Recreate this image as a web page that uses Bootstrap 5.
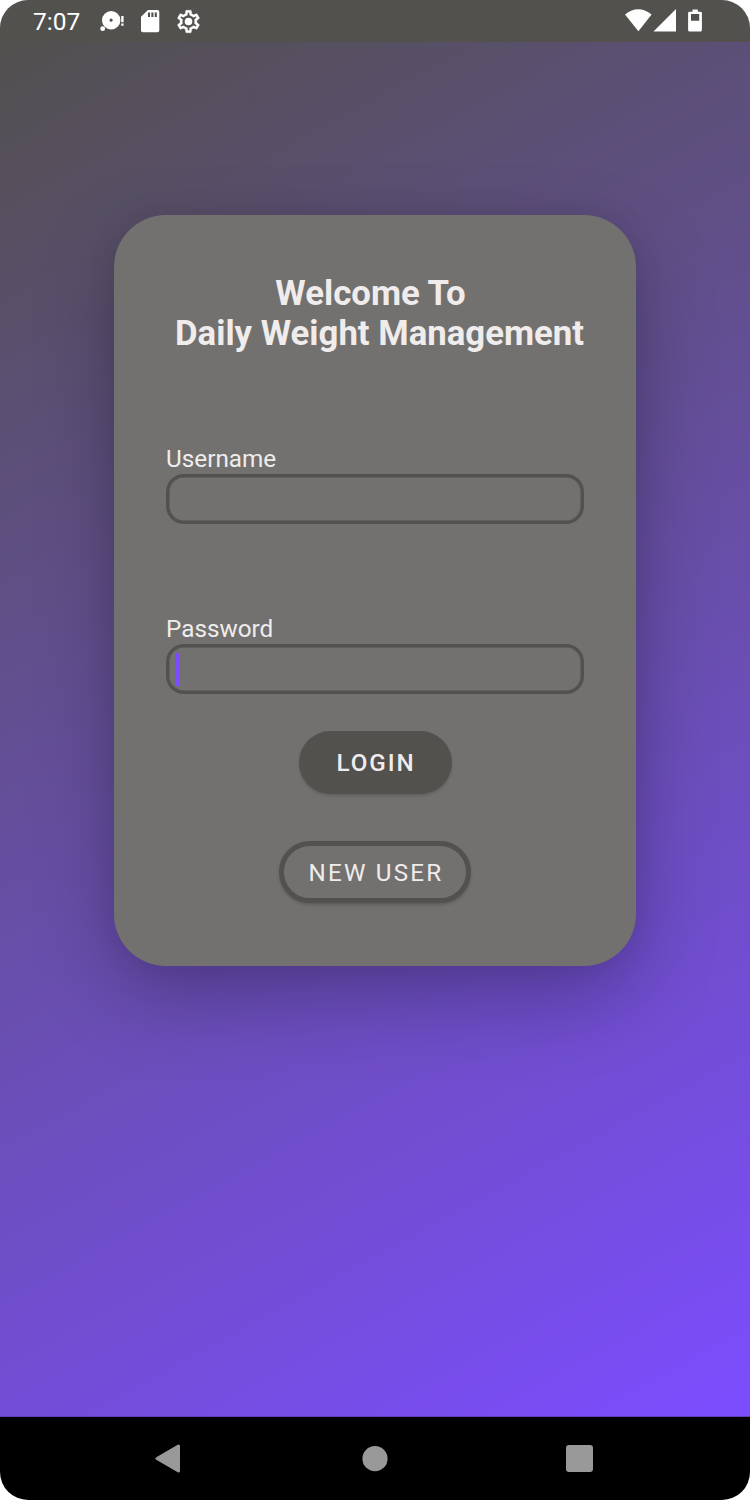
<!DOCTYPE html>
<html lang="en">
<head>
<meta charset="utf-8">
<meta name="viewport" content="width=device-width, initial-scale=1">
<title>Daily Weight Management</title>
<link href="https://cdn.jsdelivr.net/npm/bootstrap@5.3.0/dist/css/bootstrap.min.css" rel="stylesheet">
<style>
  body { font-family: Roboto, sans-serif; color: #f0ecec; background: #fff; }
  .phone { width: 750px; height: 1500px; border-radius: 28px; }
  .status-bar { height: 42px; background: #52514e; padding: 0 47px 0 33px; }
  .clock { font-size: 24.5px; line-height: 42px; color: #fff; width: 66px; padding-top: 1px; }
  .screen { padding-top: 173px; background: linear-gradient(151.4deg, #52504e, #7c4dff); border-bottom: 1px solid #5f3fb8; }
  .login-card { width: 522px; height: 751px; border-radius: 52px; background: #72716f; padding: 57.5px 52px 0;
    box-shadow: 0 32px 80px rgba(0,0,0,.25), 0 0 30px rgba(0,0,0,.08); }
  .title { font-size: 34.75px; line-height: 40px; font-weight: 700; height: 172.5px; }
  .title-top { padding-right: 9px; }
  .title-bottom { padding-left: 9px; }
  .field-label { font-size: 24.3px; line-height: 28px; margin-bottom: 1px; }
  .field-box.form-control { height: 50px; border: 3px solid #52514e; border-radius: 18px; background: transparent; box-shadow: inset 0 0 0 .5px #52514e; }
  .field-gap { margin-top: 91px; }
  .caret { width: 4px; height: 33px; background: #7c4dff; left: 9px; top: 9px; }
  .pill.btn { font-size: 24.2px; letter-spacing: 2.2px; line-height: 1; color: #f0ecec; border-radius: 32px; padding: 2px 0 0 2px; }
  .pill-login.btn { width: 153px; height: 63px; margin-top: 37px; background: #52514e; font-weight: 500; border: 0; letter-spacing: 1.9px; box-shadow: 0 2px 3px rgba(0,0,0,.15); }
  .pill-new.btn { width: 192px; height: 62px; margin-top: 47px; background: #72716f; border: 5px solid #52514e; box-shadow: 0 2px 3px rgba(0,0,0,.18); }
  .nav-bar { height: 83px; background: #000; padding: 0 157px 0 155px; }
</style>
</head>
<body>
<div class="phone d-flex flex-column overflow-hidden">
  <header class="status-bar d-flex align-items-center">
    <div class="clock">7:07</div>
    <svg width="26" height="24" viewBox="99 9 26 24" fill="#fff">
      <path fill-rule="evenodd" d="M111.2 11a9.2 9.2 0 1 1 0 18.4a9.2 9.2 0 1 1 0-18.4M111.1 18.6a1.6 1.6 0 1 0 0 3.2a1.6 1.6 0 1 0 0-3.2"/>
      <circle cx="102.7" cy="28.7" r="2.4"/>
      <path d="M121.2 16h2.4v6.2h-2.4zM121.2 23.4h2.4v2.4h-2.4z"/>
    </svg>
    <svg width="20" height="24" viewBox="141 9 20 24" style="margin-left:16px">
      <path fill="#fff" d="M148 10h9.5q1.8 0 1.8 1.8v18.7q0 1.8-1.8 1.8h-14.7q-1.8 0-1.8-1.8V16.7z"/>
      <path stroke="#52514e" stroke-width="2.1" d="M149 12.4v4.6M152.4 12.4v4.6M155.8 12.4v4.6"/>
    </svg>
    <svg width="27" height="27" viewBox="0 0 24 24" fill="#fff" style="margin-left:14px">
      <path stroke="#fff" stroke-width=".3" d="M19.43 12.98c.04-.32.07-.64.07-.98 0-.34-.03-.66-.07-.98l2.11-1.65c.19-.15.24-.42.12-.64l-2-3.46c-.09-.16-.26-.25-.44-.25-.06 0-.12.01-.17.03l-2.49 1c-.52-.4-1.08-.73-1.69-.98l-.38-2.65C14.46 2.18 14.25 2 14 2h-4c-.25 0-.46.18-.49.42l-.38 2.65c-.61.25-1.17.59-1.69.98l-2.49-1c-.06-.02-.12-.03-.18-.03-.17 0-.34.09-.43.25l-2 3.46c-.13.22-.07.49.12.64l2.11 1.65c-.04.32-.07.65-.07.98 0 .33.03.66.07.98l-2.11 1.65c-.19.15-.24.42-.12.64l2 3.46c.09.16.26.25.44.25.06 0 .12-.01.17-.03l2.49-1c.52.4 1.08.73 1.69.98l.38 2.65c.03.24.24.42.49.42h4c.25 0 .46-.18.49-.42l.38-2.65c.61-.25 1.17-.59 1.69-.98l2.49 1c.06.02.12.03.18.03.17 0 .34-.09.43-.25l2-3.46c.12-.22.07-.49-.12-.64l-2.11-1.65zm-1.98-1.71c.04.31.05.52.05.73 0 .21-.02.43-.05.73l-.14 1.13.89.7 1.08.84-.7 1.21-1.27-.51-1.04-.42-.9.68c-.43.32-.84.56-1.25.73l-1.06.43-.16 1.13-.2 1.35h-1.4l-.19-1.35-.16-1.13-1.06-.43c-.43-.18-.83-.41-1.23-.71l-.91-.7-1.06.43-1.27.51-.7-1.21 1.08-.84.89-.7-.14-1.13c-.03-.31-.05-.54-.05-.74s.02-.43.05-.73l.14-1.13-.89-.7-1.08-.84.7-1.21 1.27.51 1.04.42.9-.68c.43-.32.84-.56 1.25-.73l1.06-.43.16-1.13.2-1.35h1.39l.19 1.35.16 1.13 1.06.43c.43.18.83.41 1.23.71l.91.7 1.06-.43 1.27-.51.7 1.21-1.07.85-.89.7.14 1.13z"/>
      <circle cx="12" cy="12" r="3.4"/>
    </svg>
    <svg class="ms-auto" width="78" height="24" viewBox="625 9 78 24" fill="#fff">
      <path d="M625 14.5q13.3-10.5 26.6 0L638.4 31.3z"/>
      <path d="M676 9v22.5h-22.5z"/>
      <path fill-rule="evenodd" d="M692.5 9.5h5.3v2.2h2.7q1.4 0 1.4 1.4v17q0 1.5-1.4 1.5h-11q-1.4 0-1.4-1.5v-17q0-1.4 1.4-1.4h3zM691 14v6.8h8.2V14z"/>
    </svg>
  </header>
  <main class="screen flex-grow-1">
    <form class="login-card mx-auto d-flex flex-column">
      <h1 class="title text-center text-nowrap mb-0">
        <span class="title-top d-block">Welcome To</span>
        <span class="title-bottom d-block">Daily Weight Management</span>
      </h1>
      <label class="field-label" for="username">Username</label>
      <input class="field-box form-control" id="username" type="text">
      <label class="field-label field-gap" for="password">Password</label>
      <div class="position-relative">
        <input class="field-box form-control" id="password" type="password">
        <span class="caret position-absolute"></span>
      </div>
      <button class="pill pill-login btn mx-auto" type="button">LOGIN</button>
      <button class="pill pill-new btn mx-auto" type="button">NEW USER</button>
    </form>
  </main>
  <footer class="nav-bar d-flex justify-content-between align-items-center">
    <svg width="26" height="30" viewBox="0 0 26 30"><path d="M2 14.5L23.5 2v25z" fill="#999" stroke="#999" stroke-width="3" stroke-linejoin="round"/></svg>
    <svg width="28" height="26" viewBox="0 0 28 26"><circle cx="15" cy="12.7" r="12.6" fill="#999"/></svg>
    <svg width="27" height="28" viewBox="0 0 27 28"><rect width="27" height="27" rx="3" fill="#999"/></svg>
  </footer>
</div>
<script src="https://cdn.jsdelivr.net/npm/bootstrap@5.3.0/dist/js/bootstrap.bundle.min.js"></script>
</body>
</html>
